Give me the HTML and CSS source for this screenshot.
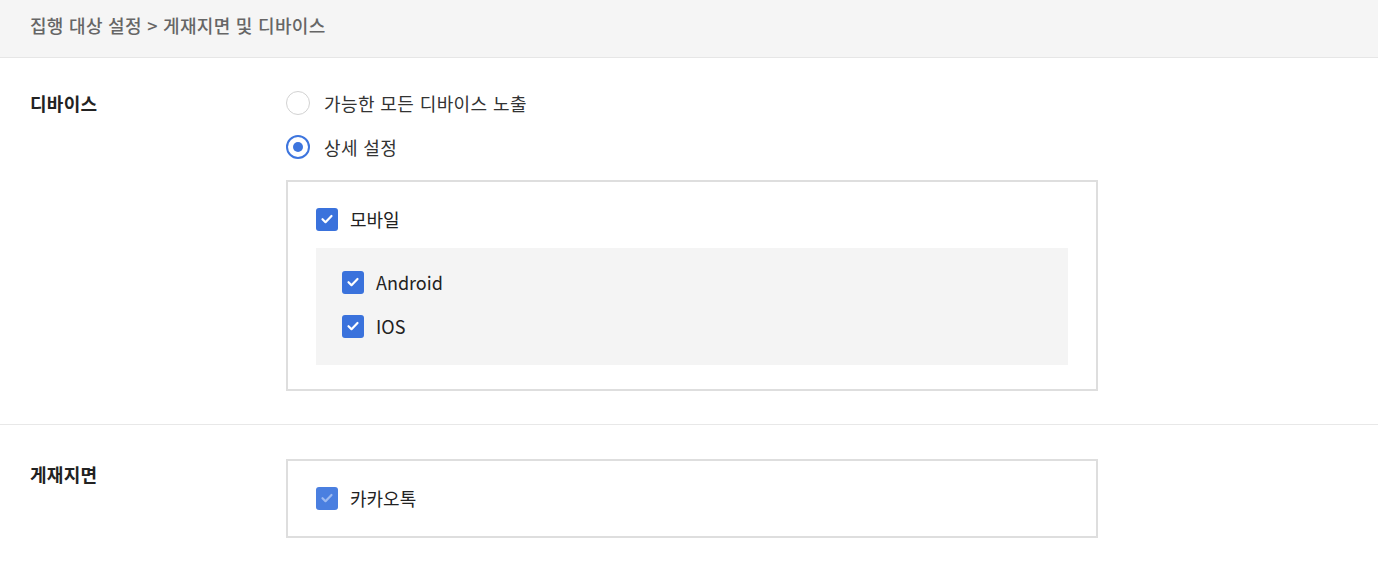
FILE: index.html
```html
<!DOCTYPE html>
<html lang="ko">
<head>
  <meta charset="UTF-8">
  <meta name="viewport" content="width=device-width, initial-scale=1.0">
  <title>게재지면 및 디바이스</title>
  <link rel="stylesheet" href="styles.css">
</head>
<body>
  <header class="page-title">집행 대상 설정 &gt; 게재지면 및 디바이스</header>

  <section class="row">
    <div class="row-label row-label-radio">디바이스</div>
    <div class="row-body">
      <label class="radio">
        <span class="radio-mark"></span>
        <span>가능한 모든 디바이스 노출</span>
      </label>
      <label class="radio">
        <span class="radio-mark is-checked"></span>
        <span>상세 설정</span>
      </label>

      <div class="option-box">
        <label class="check">
          <span class="check-mark"><svg viewBox="0 0 22 22"><path d="M6.5 11.2l3 3 6-6.2"/></svg></span>
          <span>모바일</span>
        </label>
        <div class="sub-panel">
          <label class="check">
            <span class="check-mark"><svg viewBox="0 0 22 22"><path d="M6.5 11.2l3 3 6-6.2"/></svg></span>
            <span>Android</span>
          </label>
          <label class="check">
            <span class="check-mark"><svg viewBox="0 0 22 22"><path d="M6.5 11.2l3 3 6-6.2"/></svg></span>
            <span>IOS</span>
          </label>
        </div>
      </div>
    </div>
  </section>

  <section class="row row-last">
    <div class="row-label row-label-box">게재지면</div>
    <div class="row-body">
      <div class="option-box option-box-single">
        <label class="check is-disabled">
          <span class="check-mark"><svg viewBox="0 0 22 22"><path d="M6.5 11.2l3 3 6-6.2"/></svg></span>
          <span>카카오톡</span>
        </label>
      </div>
    </div>
  </section>
</body>
</html>
```

FILE: styles.css
```css
body {
  margin: 0;
  font-family: "Noto Sans CJK KR", "Noto Sans", sans-serif;
  color: #222;
  background-color: #fff;
}

.page-title {
  height: 57px;
  line-height: 50px;
  padding: 0 30px;
  background-color: #f5f5f5;
  border-bottom: 1px solid #e6e6e6;
  font-size: 18px;
  font-weight: 500;
  letter-spacing: 0.3px;
  color: #666;
}

.row {
  display: flex;
  padding: 33px 0;
  border-bottom: 1px solid #e8e8e8;
}

.row-last {
  padding-top: 34px;
  border-bottom: none;
}

.row-label {
  width: 256px;
  padding-left: 30px;
  font-size: 18px;
  font-weight: 700;
  letter-spacing: 0.3px;
  color: #222;
}

.row-label-radio {
  line-height: 24px;
}

.row-label-box {
  line-height: 30px;
}

.row-body {
  width: 812px;
  display: flex;
  flex-direction: column;
}

.radio {
  display: flex;
  align-items: center;
  gap: 14px;
  height: 24px;
  margin-bottom: 20px;
  font-size: 18px;
  letter-spacing: 0.4px;
  color: #333;
}

.radio-mark {
  box-sizing: border-box;
  width: 24px;
  height: 24px;
  border: 1px solid #d2d2d2;
  border-radius: 50%;
  background-color: #fff;
}

.radio-mark.is-checked {
  border: 2px solid #3d75de;
  display: flex;
  align-items: center;
  justify-content: center;
}

.radio-mark.is-checked::after {
  content: "";
  width: 10px;
  height: 10px;
  border-radius: 50%;
  background-color: #3d75de;
}

.option-box {
  margin-top: 1px;
  border: 2px solid #dedede;
  padding: 22px 28px 24px;
  display: flex;
  flex-direction: column;
  gap: 14px;
}

.option-box-single {
  margin-top: 0;
  padding-bottom: 23px;
}

.sub-panel {
  background-color: #f4f4f4;
  padding: 19px 26px 24px;
  display: flex;
  flex-direction: column;
  gap: 14px;
}

.check {
  display: flex;
  align-items: center;
  gap: 12px;
  height: 30px;
  font-size: 18px;
  color: #222;
}

.check-mark {
  width: 22px;
  height: 23px;
  border-radius: 3px;
  background-color: #3a72dc;
  display: flex;
  align-items: center;
  justify-content: center;
}

.check-mark svg {
  width: 22px;
  height: 22px;
  fill: none;
  stroke: #fff;
  stroke-width: 2.2;
  stroke-linecap: round;
  stroke-linejoin: round;
}

.check.is-disabled .check-mark {
  background-color: #4a7fe0;
}

.check.is-disabled .check-mark svg {
  stroke: #9dbaf0;
}
```
